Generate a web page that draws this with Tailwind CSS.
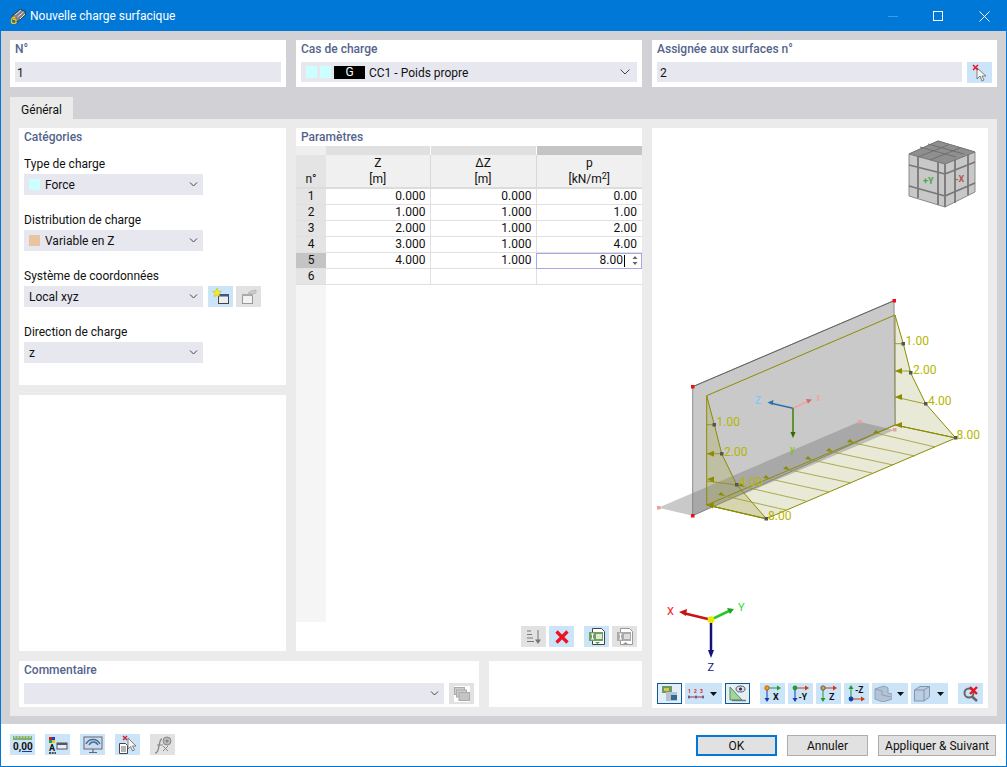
<!DOCTYPE html>
<html lang="fr">
<head>
<meta charset="UTF-8">
<title>Nouvelle charge surfacique</title>
<script src="https://cdn.jsdelivr.net/npm/@tailwindcss/browser@4"></script>
</head>
<body class="m-0 overflow-hidden bg-white">
<div class="w-[1007px] h-[767px] flex flex-col border border-[#0078d7] font-['Roboto','Noto_Sans',sans-serif] text-[12px] text-[#111] bg-[#d2d1d5]">

  <!-- title bar -->
  <div class="h-[30px] shrink-0 bg-[#0078d7] flex items-center text-white text-[12px]">
    <svg class="ml-[9px] w-[16px] h-[16px]" viewBox="0 0 16 16"><path d="M2 8L10 1.500 15 3 15.500 7 8 13.500 3 12.500Z" fill="#7d828c" stroke="#2c2c2c" stroke-width=".8"/><path d="M5 7l6-5M7.500 9l6-5M10 11l5-5" stroke="#e2e2e2" stroke-width="1"/><path d="M5.500 9.500H2.800L1.500 12v2.500l1 1h2.500l1-1V12.500l-1-1H3" fill="none" stroke="#f5c211" stroke-width="1.300"/></svg>
    <span class="ml-[4px]">Nouvelle charge surfacique</span>
    <div class="ml-auto flex items-center">
      <div class="w-[10px] h-px bg-[#3d9be3] mr-[35px]"></div>
      <div class="w-[10px] h-[10px] border border-white mr-[36px]"></div>
      <svg class="w-[11px] h-[11px] mr-[16px]" viewBox="0 0 11 11"><path d="M.5.5l10 10M10.500.5l-10 10" stroke="#fff" stroke-width="1"/></svg>
    </div>
  </div>

  <!-- top row -->
  <div class="flex gap-[10px] pl-[9px] pt-[9px] h-[56px] shrink-0">
    <div class="w-[276px] h-[47px] bg-white px-[5px]">
      <div class="h-[22px] leading-[18px] font-medium text-[#54648c]">N°</div>
      <div class="h-[20px] bg-[#e7e7f0] pl-[2px] leading-[22px]">1</div>
    </div>
    <div class="w-[346px] h-[47px] bg-white px-[5px]">
      <div class="h-[22px] leading-[18px] font-medium text-[#54648c]">Cas de charge</div>
      <div class="h-[20px] bg-[#e7e7f0] flex items-center">
        <span class="ml-[5px] w-[11px] h-[12px] bg-[#ccffff]"></span>
        <span class="ml-[3px] w-[11px] h-[12px] bg-[#ccffff]"></span>
        <span class="ml-[3px] w-[31px] h-[13px] bg-black text-white text-center leading-[13px]">G</span>
        <span class="ml-[4px] pt-[2px]">CC1 - Poids propre</span>
        <svg class="ml-auto mr-[7px] w-[10px] h-[6px]" viewBox="0 0 10 6"><path d="M.5.5L5 5 9.500.5" fill="none" stroke="#444"/></svg>
      </div>
    </div>
    <div class="w-[345px] h-[47px] bg-white px-[5px]">
      <div class="h-[22px] leading-[18px] font-medium text-[#54648c]">Assignée aux surfaces n°</div>
      <div class="flex gap-[5px]">
        <div class="w-[305px] h-[20px] bg-[#e7e7f0] pl-[3px] leading-[22px]">2</div>
        <div class="w-[25px] h-[21px] bg-[#cce4f7] flex items-center justify-center">
          <svg class="w-[16px] h-[18px]" viewBox="0 0 16 18"><path d="M5 4l0 11 3-3 2 5 2-1-2-4 4 0z" fill="#f4f4f4" stroke="#666" stroke-width=".8"/><path d="M1 1l5 5M6 1l-5 5" stroke="#f01020" stroke-width="1.500"/></svg>
        </div>
      </div>
    </div>
  </div>

  <!-- tab -->
  <div class="pl-[9px] h-[22px] mt-[10px] shrink-0">
    <div class="w-[63px] h-[22px] bg-[#ebebeb] text-center leading-[26px]">Général</div>
  </div>

  <!-- general panel -->
  <div class="ml-[9px] w-[987px] h-[597px] shrink-0 bg-[#ebebeb] p-[9px] flex gap-[10px]">

    <!-- left + middle -->
    <div class="w-[623px] flex flex-col gap-[10px]">
      <div class="flex gap-[10px] h-[523px]">

        <div class="w-[267px] flex flex-col gap-[10px]">
          <div class="h-[257px] bg-white px-[5px]">
            <div class="h-[18px] leading-[18px] font-medium text-[#54648c]">Catégories</div>
            <div class="mt-[9px] h-[19px] leading-[18px]">Type de charge</div>
            <div class="w-[179px] h-[21px] bg-[#e7e7f0] flex items-center">
              <span class="ml-[5px] w-[11px] h-[11px] bg-[#ccffff]"></span>
              <span class="ml-[5px]">Force</span>
              <svg class="ml-auto mr-[5px] w-[9px] h-[5px]" viewBox="0 0 8 5"><path d="M.5.5L4 4 7.500.5" fill="none" stroke="#444"/></svg>
            </div>
            <div class="mt-[16px] h-[19px] leading-[18px]">Distribution de charge</div>
            <div class="w-[179px] h-[21px] bg-[#e7e7f0] flex items-center">
              <span class="ml-[5px] w-[11px] h-[11px] bg-[#e8c5a0]"></span>
              <span class="ml-[5px]">Variable en Z</span>
              <svg class="ml-auto mr-[5px] w-[9px] h-[5px]" viewBox="0 0 8 5"><path d="M.5.5L4 4 7.500.5" fill="none" stroke="#444"/></svg>
            </div>
            <div class="mt-[16px] h-[19px] leading-[18px]">Système de coordonnées</div>
            <div class="flex">
              <div class="w-[179px] h-[21px] bg-[#e7e7f0] flex items-center pl-[5px]">
                Local xyz
                <svg class="ml-auto mr-[5px] w-[9px] h-[5px]" viewBox="0 0 8 5"><path d="M.5.5L4 4 7.500.5" fill="none" stroke="#444"/></svg>
              </div>
              <div class="ml-[5px] w-[25px] h-[21px] bg-[#cce4f7] flex items-center justify-center">
                <svg class="w-[18px] h-[17px]" viewBox="0 0 18 17"><rect x="6.500" y="6.500" width="10" height="9" fill="#eee" stroke="#444"/><rect x="6" y="6" width="11" height="2.500" fill="#44538a"/><path d="M5 0l1.300 3.200 3.200.3-2.500 2 .9 3.200L5 7 2.100 8.700l.9-3.200-2.500-2 3.200-.3z" fill="#f5ee20" stroke="#b5a800" stroke-width=".4"/></svg>
              </div>
              <div class="ml-[3px] w-[25px] h-[21px] bg-[#e2e2e2] flex items-center justify-center">
                <svg class="w-[18px] h-[17px]" viewBox="0 0 18 17"><rect x="2.500" y="6.500" width="10" height="9" fill="#f2f2f2" stroke="#999"/><rect x="2" y="6" width="11" height="2" fill="#aaa"/><path d="M8 5l3-2 5-1v3l-4 1z" fill="#ccc" stroke="#aaa" stroke-width=".6"/></svg>
              </div>
            </div>
            <div class="mt-[16px] h-[19px] leading-[18px]">Direction de charge</div>
            <div class="w-[179px] h-[21px] bg-[#e7e7f0] flex items-center pl-[5px]">
              z
              <svg class="ml-auto mr-[5px] w-[9px] h-[5px]" viewBox="0 0 8 5"><path d="M.5.5L4 4 7.500.5" fill="none" stroke="#444"/></svg>
            </div>
          </div>
          <div class="h-[256px] bg-white"></div>
        </div>

        <!-- parameters -->
        <div class="w-[346px] bg-white flex flex-col">
          <div class="h-[18px] pl-[5px] leading-[18px] font-medium text-[#54648c]">Paramètres</div>
          <table class="table-fixed border-collapse w-[346px] text-[12px]">
            <colgroup><col class="w-[30px]"><col class="w-[104px]"><col class="w-[106px]"><col class="w-[106px]"></colgroup>
            <tbody>
              <tr class="h-[9px]">
                <td class="bg-[#efefef] p-0"></td>
                <td class="bg-[#e0e0e0] border-r border-white p-0"></td>
                <td class="bg-[#e0e0e0] border-r border-white p-0"></td>
                <td class="bg-[#c4c4c4] p-0"></td>
              </tr>
              <tr class="h-[32px] bg-[#f0f0f0] text-center leading-[16px] border-b-2 border-[#dcdcdc]">
                <td class="align-bottom p-0 bg-[#e4e4e4]">n°</td>
                <td class="p-0 border-r border-[#d8d8d8]">Z<br>[m]</td>
                <td class="p-0 border-r border-[#d8d8d8]">ΔZ<br>[m]</td>
                <td class="p-0">p<br>[kN/m<sup class="text-[9px] leading-none">2</sup>]</td>
              </tr>
              <tr class="h-[16px] border-b border-[#e0e0e0] text-right leading-[15px]">
                <td class="p-0 text-center bg-[#e4e4e4]">1</td>
                <td class="p-0 pr-[4px] border-r border-[#e0e0e0]">0.000</td>
                <td class="p-0 pr-[4px] border-r border-[#e0e0e0]">0.000</td>
                <td class="p-0 pr-[5px]">0.00</td>
              </tr>
              <tr class="h-[16px] border-b border-[#e0e0e0] text-right leading-[15px]">
                <td class="p-0 text-center bg-[#e4e4e4]">2</td>
                <td class="p-0 pr-[4px] border-r border-[#e0e0e0]">1.000</td>
                <td class="p-0 pr-[4px] border-r border-[#e0e0e0]">1.000</td>
                <td class="p-0 pr-[5px]">1.00</td>
              </tr>
              <tr class="h-[16px] border-b border-[#e0e0e0] text-right leading-[15px]">
                <td class="p-0 text-center bg-[#e4e4e4]">3</td>
                <td class="p-0 pr-[4px] border-r border-[#e0e0e0]">2.000</td>
                <td class="p-0 pr-[4px] border-r border-[#e0e0e0]">1.000</td>
                <td class="p-0 pr-[5px]">2.00</td>
              </tr>
              <tr class="h-[16px] border-b border-[#e0e0e0] text-right leading-[15px]">
                <td class="p-0 text-center bg-[#e4e4e4]">4</td>
                <td class="p-0 pr-[4px] border-r border-[#e0e0e0]">3.000</td>
                <td class="p-0 pr-[4px] border-r border-[#e0e0e0]">1.000</td>
                <td class="p-0 pr-[5px]">4.00</td>
              </tr>
              <tr class="h-[16px] border-b border-[#e0e0e0] text-right leading-[15px]">
                <td class="p-0 text-center bg-[#c4c4c4]">5</td>
                <td class="p-0 pr-[4px] border-r border-[#e0e0e0]">4.000</td>
                <td class="p-0 pr-[4px] border-r border-[#e0e0e0]">1.000</td>
                <td class="p-0 outline outline-[#a8a8e8] -outline-offset-1">
                  <div class="flex items-center justify-end h-[15px]">
                    <span>8.00</span>
                    <span class="ml-px w-px h-[12px] bg-black"></span>
                    <svg class="ml-[7px] mr-[4px] w-[6px] h-[9px]" viewBox="0 0 6 9"><path d="M3 0l2.500 3h-5zM3 9L.5 6h5z" fill="#666"/></svg>
                  </div>
                </td>
              </tr>
              <tr class="h-[16px] border-b border-[#e0e0e0] text-right leading-[15px]">
                <td class="p-0 text-center bg-[#e4e4e4]">6</td>
                <td class="p-0 border-r border-[#e0e0e0]"></td>
                <td class="p-0 border-r border-[#e0e0e0]"></td>
                <td class="p-0"></td>
              </tr>
            </tbody>
          </table>
          <div class="w-[30px] flex-1 bg-[#f5f5f5]"></div>
          <div class="h-[29px] shrink-0 flex items-start pt-[4px] pl-[225px]">
            <div class="w-[25px] h-[21px] bg-[#e2e2e2] flex items-center justify-center">
              <svg class="w-[16px] h-[16px]" viewBox="0 0 16 16"><path d="M1 2h4M1 5.500h5M1 9h6M1 12.500h7" stroke="#777"/><path d="M12 1v11" stroke="#777"/><path d="M9 10.500h6l-3 4.500z" fill="#777"/></svg>
            </div>
            <div class="ml-[3px] w-[25px] h-[21px] bg-[#cce4f7] flex items-center justify-center">
              <svg class="w-[14px] h-[14px]" viewBox="0 0 14 14"><path d="M1.500 1.500l11 11M12.500 1.500l-11 11" stroke="#ee1122" stroke-width="3.200"/></svg>
            </div>
            <div class="ml-[10px] w-[25px] h-[21px] bg-[#cce4f7] flex items-center justify-center">
              <svg class="w-[18px] h-[18px]" viewBox="0 0 18 18"><path d="M4.500.5h9l3 3v13h-12z" fill="#fff" stroke="#444"/><rect x="1" y="4" width="14" height="9" fill="#6f9f62"/><path d="M3 6h3M3 11h3M4.500 6v5" stroke="#fff"/><rect x="8" y="6" width="6" height="5" fill="#d8ead2"/><path d="M7 14h5l-2.500 2z" fill="#3f9f3f"/></svg>
            </div>
            <div class="ml-[3px] w-[25px] h-[21px] bg-[#e2e2e2] flex items-center justify-center">
              <svg class="w-[18px] h-[18px]" viewBox="0 0 18 18"><path d="M4.500.5h9l3 3v13h-12z" fill="#fff" stroke="#999"/><rect x="1" y="4" width="14" height="9" fill="#aaa"/><path d="M3 6h3M3 11h3M4.500 6v5" stroke="#fff"/><rect x="8" y="6" width="6" height="5" fill="#ddd"/><path d="M7 16h5l-2.500-2z" fill="#999"/></svg>
            </div>
          </div>
        </div>
      </div>

      <!-- comment row -->
      <div class="flex gap-[10px] h-[47px]">
        <div class="w-[460px] bg-white px-[5px]">
          <div class="h-[22px] leading-[18px] font-medium text-[#54648c]">Commentaire</div>
          <div class="flex gap-[5px]">
            <div class="w-[420px] h-[21px] bg-[#e7e7f0] flex items-center">
              <svg class="ml-auto mr-[5px] w-[9px] h-[5px]" viewBox="0 0 8 5"><path d="M.5.5L4 4 7.500.5" fill="none" stroke="#444"/></svg>
            </div>
            <div class="w-[25px] h-[21px] bg-[#e2e2e2] flex items-center justify-center">
              <div class="w-[16px] h-[16px] bg-white flex items-center justify-center">
                <svg class="w-[16px] h-[14px]" viewBox="0 0 16 14"><rect x=".5" y=".5" width="10" height="7" fill="#ccc" stroke="#aaa"/><rect x="2.500" y="3" width="10" height="7" fill="#ccc" stroke="#aaa"/><rect x="5" y="5.500" width="10.500" height="8" fill="#c4c4c4" stroke="#aaa"/></svg>
              </div>
            </div>
          </div>
        </div>
        <div class="w-[153px] bg-white"></div>
      </div>
    </div>

    <!-- 3d view -->
    <div class="w-[336px] h-[580px] bg-white flex flex-col">
      <svg class="block w-[336px] h-[555px] shrink-0" viewBox="652 128 336 555" font-family="Roboto, sans-serif">
        <!-- view cube -->
        <path d="M938 141l37 11v40l-30 15-36-11v-42z" fill="#c8c8c8" stroke="#8a8a8a"/>
        <path d="M938 141l37 11-30 12-36-10z" fill="#8f8f8f" stroke="#777"/>
        <path d="M945 164v43M909 165l36 9M909 186l36 10M918 157v41M938 162v43M945 174l30-12M945 196l30-13M955 160v43M968 155v40" stroke="#777" stroke-width="1.800" fill="none"/>
        <path d="M920 147l36 10M928 144l36 10M918 157l30-12M930 160l30-12" stroke="#6f6f6f" fill="none"/>
        <text x="923" y="184" font-size="9" font-weight="700" fill="#45a845">+Y</text>
        <text x="955" y="182" font-size="9" font-weight="700" fill="#b45555">-X</text>

        <!-- right load -->
        <path d="M895 315L903.300 343.700 910.700 373 925.700 403.700 955.700 438 895 425z" fill="#e9e9d8" stroke="#8c8c00"/>
        <!-- floor plate load -->
        <path d="M706.700 505L895 425 955.700 438 766.300 518.700z" fill="#e9e9d8" stroke="#8c8c00"/>
        <!-- wall -->
        <path d="M692.700 386.700L894 300.700 895 425 692.700 515.700z" fill="#c9c9c9" stroke="#8d8d8d"/>
        <path d="M692.700 386.700L894 300.700" stroke="#666"/>
        <!-- plate -->
        <path d="M658.300 507.700L859.300 421.700 894.300 430 692.700 515.700z" fill="#777" fill-opacity=".4"/>
        <!-- left load -->
        <path d="M706.700 395.700L714.300 424.700 721.700 453.700 736.700 484.700 766.300 518.700 706.700 505z" fill="#a8a850" fill-opacity=".3" stroke="#8c8c00"/>
        <path d="M706.700 395.700L895 315M706.700 505L895 425" stroke="#8c8c00" fill="none"/>
        <path d="M786 510L725 496M806 501L745 487M829 492L770 479M851 483L790 470M872 473L812 460M893 465L833 452M915 456L854 443M935 447L880 434" stroke="#9a9a30" stroke-width=".8" fill="none"/>
        <path d="M706.700 424.700H714M706.700 453.700H722M706.700 481L737 485M706.700 505L766 519M895 343.700H903M895 371H911M895 397L926 404M895 425L956 438" stroke="#8c8c00" stroke-width=".8" fill="none"/>
        <g fill="#8c8c00">
          <path d="M707 453.700l7-3v6zM707 479l7-2.500 0 6zM707 505l7-2.500-1 6zM895 371l7-3v6zM895 397l7-3 0 6zM895 425l7-3 0 6z"/>
          <path d="M725 496l-7-1 3-3 zM745 487l-7-1 3-3zM770 479l-7-1 3-3zM790 470l-7-1 3-3zM812 460l-7-1 3-3zM833 452l-7-1 3-3zM854 443l-7-1 3-3zM880 434l-7-1 3-3z"/>
        </g>
        <g fill="#555"><rect x="712.500" y="423" width="3.500" height="3.500"/><rect x="720" y="452" width="3.500" height="3.500"/><rect x="735" y="483" width="3.500" height="3.500"/><rect x="764.500" y="517" width="3.500" height="3.500"/><rect x="901.500" y="342" width="3.500" height="3.500"/><rect x="909" y="371" width="3.500" height="3.500"/><rect x="924" y="402" width="3.500" height="3.500"/><rect x="954" y="436" width="3.500" height="3.500"/></g>
        <g fill="#b5b500" font-size="12"><text x="716.500" y="426">1.00</text><text x="724" y="455.500">2.00</text><text x="739" y="486">4.00</text><text x="768" y="520">8.00</text><text x="905.500" y="345">1.00</text><text x="913" y="374">2.00</text><text x="928" y="405">4.00</text><text x="956.500" y="439">8.00</text></g>
        <g fill="#ee1111"><rect x="691" y="385" width="3.500" height="3.500"/><rect x="892.500" y="299" width="3.500" height="3.500"/><rect x="691" y="514" width="3.500" height="3.500"/></g>
        <g fill="#eba0a0"><rect x="657" y="506" width="3.500" height="3.500"/><rect x="858" y="420" width="3.500" height="3.500"/><rect x="893" y="428" width="3.500" height="3.500"/></g>

        <!-- local axes -->
        <path d="M793 408.300L770 403" stroke="#2a6fb0" stroke-width="1.500"/><path d="M767.500 402.500l6-2.500-1 5z" fill="#2a6fb0"/>
        <path d="M793 408.300L810 400.500" stroke="#f4a0a0" stroke-width="1.500"/><path d="M812 399.500l-6-.5 2 4.500z" fill="#d46a6a"/>
        <path d="M793 408.300V434" stroke="#3b8000" stroke-width="1.500"/><path d="M793 438l-2.500-6h5z" fill="#2f6a00"/>
        <text x="755" y="404" font-size="10" fill="#6ec8ff">Z</text><text x="816" y="401" font-size="10" fill="#f4a0a0">x</text><text x="790" y="453" font-size="10" fill="#7cc000">y</text>

        <!-- global axes -->
        <path d="M711 619.700L685 613.500" stroke="#c81414" stroke-width="2.500"/><path d="M679 612l8-3-1 7z" fill="#c81414"/>
        <path d="M711 619.700L729 611" stroke="#22c922" stroke-width="2.500"/><path d="M734 609l-7-1 3 6z" fill="#22a022"/>
        <path d="M711 619.700V652" stroke="#12127d" stroke-width="2.500"/><path d="M711 658l-3-8h6z" fill="#12127d"/>
        <circle cx="711" cy="619.700" r="3.400" fill="#e8e800"/>
        <text x="667" y="615" font-size="11" fill="#f01414">X</text><text x="738" y="611" font-size="11" fill="#22dd22">Y</text><text x="707.500" y="671" font-size="11" fill="#12127d">Z</text>
      </svg>

      <!-- view toolbar -->
      <div class="flex pl-[5px] h-[21px]">
        <div class="w-[25px] h-[21px] bg-[#e4eef7] border border-[#0f5a96] flex items-center justify-center">
          <svg class="w-[17px] h-[17px]" viewBox="0 0 17 17"><rect x="1" y="1" width="10" height="7" fill="#6a9a6a"/><rect x="3" y="3" width="5" height="3" fill="#d9c74b"/><rect x="5" y="7" width="11" height="9" fill="#b8c3cf"/><rect x="10" y="10" width="6" height="5" fill="#2f6a96"/></svg>
        </div>
        <div class="ml-[3px] w-[37px] h-[21px] bg-[#cce4f7] flex items-center">
          <svg class="ml-[2px] w-[18px] h-[12px]" viewBox="0 0 18 12"><text x="1" y="5" font-size="5" font-weight="700" fill="#e02020">1</text><text x="7" y="5" font-size="5" font-weight="700" fill="#e02020">2</text><text x="13" y="5" font-size="5" font-weight="700" fill="#e02020">3</text><path d="M1 9h16" stroke="#b03030"/><path d="M2 7.500v3M9 7.500v3M16 7.500v3" stroke="#2a2a80"/></svg>
          <svg class="ml-[5px] w-[7px] h-[4px]" viewBox="0 0 7 4"><path d="M0 0h7L3.500 4z" fill="#111"/></svg>
        </div>
        <div class="ml-[3px] w-[25px] h-[21px] bg-[#e4eef7] border border-[#0f5a96] flex items-center justify-center">
          <svg class="w-[19px] h-[17px]" viewBox="0 0 19 17"><path d="M2 2l12 13H2z" fill="#9fd89f" stroke="#5a8a5a"/><path d="M4 15.500h14" stroke="#777" stroke-width="1.500"/><ellipse cx="12.500" cy="4" rx="4.500" ry="3" fill="#dde" stroke="#556"/><circle cx="12.500" cy="4" r="1.600" fill="#334"/></svg>
        </div>
        <div class="ml-[10px] w-[25px] h-[21px] bg-[#cce4f7] flex items-center justify-center">
          <svg class="w-[19px] h-[19px]" viewBox="0 0 19 19"><path d="M4 4h11" stroke="#1e9a3a"/><path d="M18 4l-4-2.500v5z" fill="#1e9a3a"/><path d="M4 4v11" stroke="#1040b0"/><path d="M4 18l-2.500-4h5z" fill="#1040b0"/><circle cx="4" cy="4" r="2.200" fill="#f0a010" stroke="#c03010" stroke-width=".7"/><text x="10" y="16" font-size="9" font-weight="700" fill="#111">X</text></svg>
        </div>
        <div class="ml-[3px] w-[25px] h-[21px] bg-[#cce4f7] flex items-center justify-center">
          <svg class="w-[19px] h-[19px]" viewBox="0 0 19 19"><path d="M4 4h11" stroke="#d03a10"/><path d="M18 4l-4-2.500v5z" fill="#d03a10"/><path d="M4 4v11" stroke="#1040b0"/><path d="M4 18l-2.500-4h5z" fill="#1040b0"/><circle cx="4" cy="4" r="2.400" fill="#1e9a3a"/><text x="7.500" y="16" font-size="8.500" font-weight="700" fill="#111">-Y</text></svg>
        </div>
        <div class="ml-[3px] w-[25px] h-[21px] bg-[#cce4f7] flex items-center justify-center">
          <svg class="w-[19px] h-[19px]" viewBox="0 0 19 19"><path d="M4 4h11" stroke="#d03a10"/><path d="M18 4l-4-2.500v5z" fill="#d03a10"/><path d="M4 4v11" stroke="#1e9a3a"/><path d="M4 18l-2.500-4h5z" fill="#1e9a3a"/><circle cx="4" cy="4" r="2.200" fill="#f0a010" stroke="#1040b0" stroke-width=".7"/><text x="10" y="16" font-size="9" font-weight="700" fill="#111">Z</text></svg>
        </div>
        <div class="ml-[3px] w-[25px] h-[21px] bg-[#cce4f7] flex items-center justify-center">
          <svg class="w-[19px] h-[19px]" viewBox="0 0 19 19"><path d="M4 15V5" stroke="#1e9a3a"/><path d="M4 1l-2.500 4h5z" fill="#1e9a3a"/><path d="M4 15h10" stroke="#d03a10"/><path d="M18 15l-4-2.500v5z" fill="#d03a10"/><circle cx="4" cy="15" r="2.400" fill="#1040b0"/><text x="8" y="9" font-size="8.500" font-weight="700" fill="#111">-Z</text></svg>
        </div>
        <div class="ml-[3px] w-[36px] h-[21px] bg-[#cce4f7] flex items-center">
          <svg class="ml-[2px] w-[18px] h-[17px]" viewBox="0 0 18 17"><path d="M1 4l9-3 4 2v5l4 1v5l-9 3-8-3z" fill="#b3c3d6" stroke="#8fa0b8"/><path d="M1 4l7 2v4l9 2" fill="none" stroke="#8fa0b8"/></svg>
          <svg class="ml-[5px] w-[7px] h-[4px]" viewBox="0 0 7 4"><path d="M0 0h7L3.500 4z" fill="#111"/></svg>
        </div>
        <div class="ml-[3px] w-[37px] h-[21px] bg-[#cce4f7] flex items-center">
          <svg class="ml-[2px] w-[18px] h-[17px]" viewBox="0 0 18 17"><path d="M1.500 5L7 1.500h9.500V12L11 16H1.500z" fill="#b3c3d6" fill-opacity=".7" stroke="#8494ad"/><path d="M1.500 5H11v11M11 5l5.500-3.500" fill="none" stroke="#8494ad"/></svg>
          <svg class="ml-[6px] w-[7px] h-[4px]" viewBox="0 0 7 4"><path d="M0 0h7L3.500 4z" fill="#111"/></svg>
        </div>
        <div class="ml-[10px] w-[25px] h-[21px] bg-[#cce4f7] flex items-center justify-center">
          <svg class="w-[18px] h-[17px]" viewBox="0 0 18 17"><circle cx="7" cy="8" r="4.500" fill="none" stroke="#666" stroke-width="2"/><path d="M10 11.500l5 4.500" stroke="#666" stroke-width="2.500"/><path d="M8 2l7 7M15 2L8 9" stroke="#ee1122" stroke-width="2.400"/></svg>
        </div>
      </div>
    </div>
  </div>

  <!-- footer -->
  <div class="mt-[8px] flex-1 bg-white flex items-start">
    <div class="flex gap-[10px] pl-[9px] pt-[10px]">
      <div class="w-[25px] h-[21px] bg-[#cce4f7] flex items-center justify-center">
        <svg class="w-[21px] h-[17px]" viewBox="0 0 21 17" font-family="Roboto, sans-serif"><rect x="1" y="0" width="19" height="4" fill="#7fb06f"/><path d="M3 0v2M6 0v2M9 0v2M12 0v2M15 0v2M18 0v2" stroke="#d8e8d0"/><text x="1" y="13.500" font-size="10" font-weight="700" fill="#111">0,00</text><path d="M10 15.500h10" stroke="#1a3a9a"/></svg>
      </div>
      <div class="w-[25px] h-[21px] bg-[#cce4f7] flex items-center justify-center">
        <svg class="w-[20px] h-[18px]" viewBox="0 0 20 18"><rect x="1" y="1" width="3" height="3" fill="#d02020"/><rect x="4" y="1" width="3" height="3" fill="#2040c0"/><rect x="1" y="4" width="3" height="3" fill="#20a040"/><rect x="4" y="4" width="3" height="3" fill="#e8c820"/><text x="1" y="15" font-size="9" font-weight="700" fill="#111">A</text><rect x="9" y="7" width="10" height="6" fill="#e8eef5" stroke="#555"/><rect x="9" y="7" width="10" height="2" fill="#556"/><path d="M1 17h7" stroke="#222" stroke-width="1.500" stroke-dasharray="2 .7"/></svg>
      </div>
      <div class="w-[25px] h-[21px] bg-[#cce4f7] flex items-center justify-center">
        <svg class="w-[20px] h-[18px]" viewBox="0 0 20 18"><rect x="1" y="1" width="18" height="12" fill="#cfdbe8" stroke="#667"/><path d="M3 8c3-6 11-6 14 0M6 9c2-4 7-4 9 0" fill="none" stroke="#3f6fa0" stroke-width="1.500"/><path d="M10 13v3M6 16.500h8" stroke="#667" stroke-width="1.200"/></svg>
      </div>
      <div class="w-[25px] h-[21px] bg-[#cce4f7] flex items-center justify-center">
        <svg class="w-[20px] h-[19px]" viewBox="0 0 20 19"><path d="M1.500 8.500h6l2 2v8h-8z" fill="#fff" stroke="#444"/><path d="M3 12h5M3 14h5M3 16h5" stroke="#444" stroke-width=".8"/><path d="M10 3l0 11 2.500-2.500 2 4.500 2-1-2-4h3.500z" fill="#f4f4f4" stroke="#666" stroke-width=".8"/><path d="M5 1l4 4M9 1L5 5" stroke="#d02030" stroke-width="1.400"/></svg>
      </div>
      <div class="w-[25px] h-[21px] bg-[#e2e2e2] flex items-center justify-center">
        <svg class="w-[20px] h-[18px]" viewBox="0 0 20 18"><path d="M9 3C7 3 7 6 6 10s-1 7-4 7" fill="none" stroke="#888" stroke-width="1.300"/><path d="M4 9h6M10 10l5 5M15 10l-5 5" stroke="#888" stroke-width="1"/><circle cx="14" cy="5" r="4" fill="#bbb" stroke="#888"/><circle cx="14" cy="5" r="1.500" fill="#888"/></svg>
      </div>
    </div>
    <div class="ml-auto flex pt-[11px] pr-[10px]">
      <button class="w-[81px] h-[21px] bg-[#e1e1e1] border-2 border-[#0078d7] text-[#111]">OK</button>
      <button class="ml-[10px] w-[81px] h-[21px] bg-[#e1e1e1] border border-[#adadad] text-[#111]">Annuler</button>
      <button class="ml-[10px] w-[118px] h-[21px] bg-[#e1e1e1] border border-[#adadad] text-[#111]">Appliquer &amp; Suivant</button>
    </div>
  </div>
</div>
</body>
</html>
